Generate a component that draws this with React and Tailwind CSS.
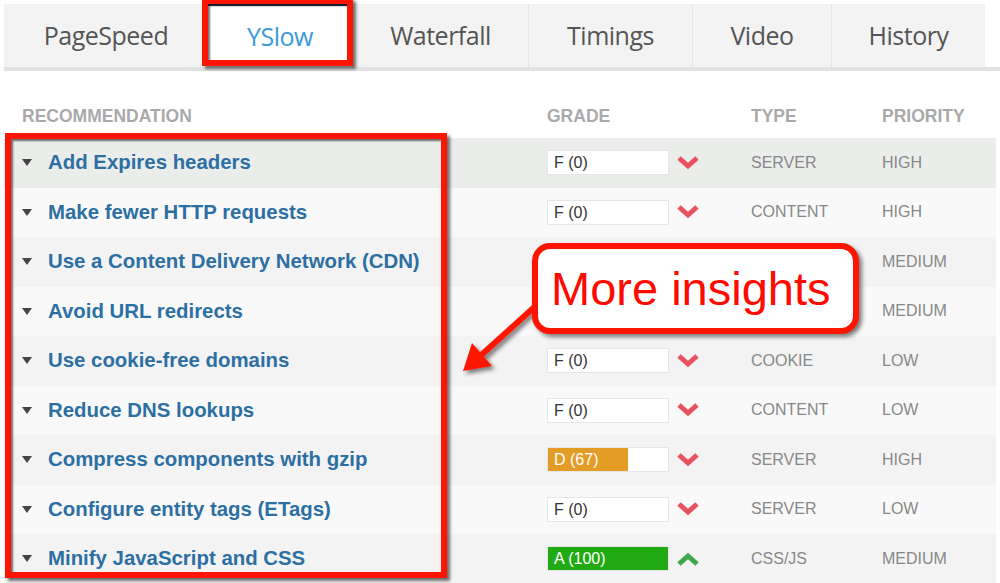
import React from "react";

const tabs = [
  { label: "PageSpeed", w: "w-[204px]" },
  { label: "YSlow", w: "w-[144px]", active: true },
  { label: "Waterfall", w: "w-[176px]" },
  { label: "Timings", w: "w-[164px]" },
  { label: "Video", w: "w-[139px]" },
  { label: "History", w: "w-[154px]" },
];

const rows = [
  { t: "Add Expires headers", g: "F (0)", s: 0, type: "SERVER", p: "HIGH" },
  { t: "Make fewer HTTP requests", g: "F (0)", s: 0, type: "CONTENT", p: "HIGH" },
  { t: "Use a Content Delivery Network (CDN)", hidden: true, p: "MEDIUM" },
  { t: "Avoid URL redirects", hidden: true, p: "MEDIUM" },
  { t: "Use cookie-free domains", g: "F (0)", s: 0, type: "COOKIE", p: "LOW" },
  { t: "Reduce DNS lookups", g: "F (0)", s: 0, type: "CONTENT", p: "LOW" },
  { t: "Compress components with gzip", g: "D (67)", s: 67, type: "SERVER", p: "HIGH" },
  { t: "Configure entity tags (ETags)", g: "F (0)", s: 0, type: "SERVER", p: "LOW" },
  { t: "Minify JavaScript and CSS", g: "A (100)", s: 100, type: "CSS/JS", p: "MEDIUM" },
];

const rowBg = [
  "bg-[#ebedeb]",
  "bg-[#f9f9f9]",
  "bg-[#f3f3f3]",
  "bg-[#f9f9f9]",
  "bg-[#f3f3f3]",
  "bg-[#f9f9f9]",
  "bg-[#f3f3f3]",
  "bg-[#f9f9f9]",
  "bg-[#f3f3f3]",
];

function Chevron({ up }) {
  return (
    <svg width="24" height="16" viewBox="0 0 24 16" className="shrink-0">
      {up ? (
        <polyline points="3,13 12,5 21,13" fill="none" stroke="#3ba84a" strokeWidth="5" />
      ) : (
        <polyline points="3,3 12,11 21,3" fill="none" stroke="#e8525f" strokeWidth="5" />
      )}
    </svg>
  );
}

function Grade({ g, s }) {
  const fill = s === 100 ? "bg-[#22aa14]" : s >= 60 ? "bg-[#e39d26]" : "";
  return (
    <div className="relative w-[122px] h-[25px] bg-white border border-[#e6e6e6]">
      {s > 0 && <div className={`absolute left-0 top-0 bottom-0 ${fill}`} style={{ width: `${s}%` }} />}
      <span
        className={`relative pl-[6px] leading-[23px] text-[16px] ${s > 0 ? "text-white" : "text-[#333]"}`}
      >
        {g}
      </span>
    </div>
  );
}

export default function App() {
  return (
    <div
      className="relative w-[1000px] h-[583px] overflow-hidden bg-white"
      style={{ fontFamily: '"Liberation Sans", Arial, sans-serif' }}
    >
      {/* Tabs */}
      <div className="pt-[4px] pl-[4px]">
        <div className="flex h-[63px]">
          {tabs.map((t, i) => (
            <div
              key={t.label}
              className={`${t.w} flex items-center justify-center text-[25px] ${
                t.active
                  ? "bg-white text-[#3a9ad9] border-t-2 border-[#23405c]"
                  : "bg-[#f3f3f3] text-[#555]"
              } ${i > 1 ? "border-l border-[#e4e4e4]" : ""}`}
              style={{ fontFamily: '"Open Sans", "Noto Sans", sans-serif', letterSpacing: "-0.5px" }}
            >
              {t.label}
            </div>
          ))}
        </div>
        <div className="h-[4px] bg-[#e2e2e2]" />
      </div>

      {/* Header */}
      <div className="flex items-center h-[67px] pt-[24px] text-[17.5px] font-bold text-[#a9a9a9]">
        <div className="w-[547px] pl-[22px]">RECOMMENDATION</div>
        <div className="w-[204px]">GRADE</div>
        <div className="w-[131px]">TYPE</div>
        <div>PRIORITY</div>
      </div>

      {/* Rows */}
      <div className="pl-[4px] pr-[4px]">
        {rows.map((r, i) => (
          <div key={r.t} className={`flex items-center h-[49.5px] ${rowBg[i]}`}>
            <div className="w-[543px] flex items-center">
              <span className="ml-[18px] w-0 h-0 border-l-[5px] border-r-[5px] border-t-[7px] border-l-transparent border-r-transparent border-t-[#444]" />
              <span className="ml-[16px] text-[20.4px] font-bold text-[#2c6fa3]">{r.t}</span>
            </div>
            <div className="w-[204px] flex items-center gap-[7px]">
              {!r.hidden && (
                <>
                  <Grade g={r.g} s={r.s} />
                  <Chevron up={r.s === 100} />
                </>
              )}
            </div>
            <div className="w-[131px] text-[16px] text-[#888]">{r.type}</div>
            <div className="text-[16px] text-[#888]">{r.p}</div>
          </div>
        ))}
      </div>

      {/* Annotation: YSlow box */}
      <div
        className="absolute left-[202px] top-[-2px] w-[151px] h-[68px] border-[6px] border-[#ff1400]"
        style={{ boxShadow: "3px 3px 3px rgba(0,0,0,0.55), inset 2px 2px 2px rgba(0,0,0,0.55)" }}
      />

      {/* Annotation: recommendation box */}
      <div
        className="absolute left-[5px] top-[133px] w-[442px] h-[445px] border-[6px] border-[#ff1400]"
        style={{ boxShadow: "3px 3px 3px rgba(0,0,0,0.55), inset 2px 2px 2px rgba(0,0,0,0.55)" }}
      />

      {/* Arrow */}
      <svg className="absolute left-0 top-0" width="1000" height="583" viewBox="0 0 1000 583">
        <defs>
          <filter id="sh" x="-20%" y="-20%" width="140%" height="140%">
            <feDropShadow dx="3" dy="3" stdDeviation="2" floodColor="#000" floodOpacity="0.5" />
          </filter>
        </defs>
        <g filter="url(#sh)">
          <line x1="540" y1="302" x2="478" y2="358" stroke="#ff1400" strokeWidth="6" />
          <polygon points="463,371 472,343 492,366" fill="#ff1400" />
        </g>
      </svg>

      {/* Callout */}
      <div
        className="absolute left-[532px] top-[243px] w-[327px] h-[91px] rounded-[18px] border-[6px] border-[#ff1400] bg-white flex items-center pl-[13px]"
        style={{ boxShadow: "3px 3px 4px rgba(0,0,0,0.5)" }}
      >
        <span className="text-[47px] text-[#ff0a00] leading-none">More insights</span>
      </div>
    </div>
  );
}
